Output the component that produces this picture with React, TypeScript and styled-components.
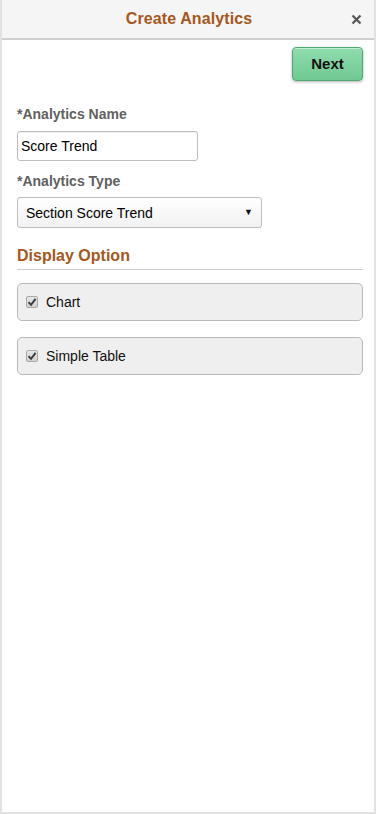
import React from "react";
import styled, { createGlobalStyle } from "styled-components";

const Global = createGlobalStyle`
  html, body { margin: 0; padding: 0; background: #fff; }
  body { font-family: "Liberation Sans", Arial, sans-serif; }
  * { box-sizing: border-box; }
`;

const Frame = styled.div`
  width: 376px;
  height: 814px;
  border: 2px solid #e2e2e2;
  border-top: none;
  display: flex;
  flex-direction: column;
  background: #fff;
`;

const Header = styled.div`
  height: 40px;
  background: #f5f5f5;
  border-bottom: 2px solid #cfcfcf;
  display: flex;
  align-items: center;
  justify-content: center;
  position: relative;
`;

const Title = styled.h1`
  margin: 0 0 1px 2px;
  font-size: 16px;
  font-weight: bold;
  color: #a5571c;
  letter-spacing: 0.1px;
`;

const Close = styled.button`
  position: absolute;
  right: 10px;
  top: 11px;
  width: 16px;
  height: 16px;
  padding: 0;
  border: none;
  background: transparent;
  display: flex;
  align-items: center;
  justify-content: center;
`;

const Body = styled.div`
  padding: 7px 11px 0 15px;
  display: flex;
  flex-direction: column;
`;

const Toolbar = styled.div`
  display: flex;
  justify-content: flex-end;
`;

const NextButton = styled.button`
  width: 71px;
  height: 34px;
  border: 1px solid #4fa872;
  border-radius: 4px;
  background: linear-gradient(#90dcae, #6fc991);
  box-shadow: 0 1px 3px rgba(0, 0, 0, 0.3), inset 0 1px 0 rgba(255, 255, 255, 0.45);
  font-family: "Liberation Sans", Arial, sans-serif;
  font-size: 15px;
  font-weight: bold;
  color: #111;
  padding: 0 0 2px;
`;

const Label = styled.div<{ $top: number }>`
  margin-top: ${(p) => p.$top}px;
  font-size: 14px;
  font-weight: bold;
  color: #616161;
`;

const TextInput = styled.div`
  margin-top: 9px;
  width: 181px;
  height: 30px;
  border: 1px solid #bdbdbd;
  border-radius: 3px;
  box-shadow: inset 0 1px 1px rgba(0, 0, 0, 0.06);
  font-size: 14px;
  color: #000;
  padding-left: 3px;
  display: flex;
  align-items: center;
`;

const Select = styled.div`
  margin-top: 8px;
  width: 245px;
  height: 31px;
  border: 1px solid #bdbdbd;
  border-radius: 3px;
  background: linear-gradient(#ffffff, #f1f1f1);
  font-size: 14px;
  color: #000;
  padding: 0 8px 0 8px;
  display: flex;
  align-items: center;
  justify-content: space-between;
`;

const Arrow = styled.span`
  font-size: 9px;
  color: #111;
  margin-top: -2px;
`;

const Section = styled.div`
  margin-top: 19px;
  padding-bottom: 4px;
  border-bottom: 1px solid #cfcfcf;
  font-size: 16px;
  font-weight: bold;
  color: #a5571c;
`;

const Options = styled.div`
  margin-top: 13px;
  display: flex;
  flex-direction: column;
  gap: 16px;
`;

const OptionBox = styled.label`
  height: 38px;
  border: 1px solid #bababa;
  border-radius: 5px;
  background: #efefef;
  display: flex;
  align-items: center;
  padding-left: 8px;
  gap: 8px;
  font-size: 14px;
  color: #111;
`;

const Check = styled.span`
  width: 12px;
  height: 12px;
  border: 1px solid #a9a9a9;
  border-radius: 2px;
  background: linear-gradient(#e6e6e6, #d2d2d2);
  display: flex;
  align-items: center;
  justify-content: center;
  margin-top: -1px;
`;

const CheckMark = () => (
  <Check>
    <svg width="10" height="10" viewBox="0 0 10 10">
      <path d="M1.5 5.2 L4 7.8 L8.6 1.8" fill="none" stroke="#3a3a3a" strokeWidth="1.9" />
    </svg>
  </Check>
);

export default function App() {
  return (
    <>
      <Global />
      <Frame>
        <Header>
          <Title>Create Analytics</Title>
          <Close aria-label="Close">
            <svg width="11" height="11" viewBox="0 0 11 11">
              <path d="M1.5 1.5 L9.5 9.5 M9.5 1.5 L1.5 9.5" stroke="#555" strokeWidth="2.2" />
            </svg>
          </Close>
        </Header>
        <Body>
          <Toolbar>
            <NextButton>Next</NextButton>
          </Toolbar>
          <Label $top={25}>*Analytics Name</Label>
          <TextInput>Score Trend</TextInput>
          <Label $top={12}>*Analytics Type</Label>
          <Select>
            <span>Section Score Trend</span>
            <Arrow>▼</Arrow>
          </Select>
          <Section>Display Option</Section>
          <Options>
            <OptionBox>
              <CheckMark />
              Chart
            </OptionBox>
            <OptionBox>
              <CheckMark />
              Simple Table
            </OptionBox>
          </Options>
        </Body>
      </Frame>
    </>
  );
}
